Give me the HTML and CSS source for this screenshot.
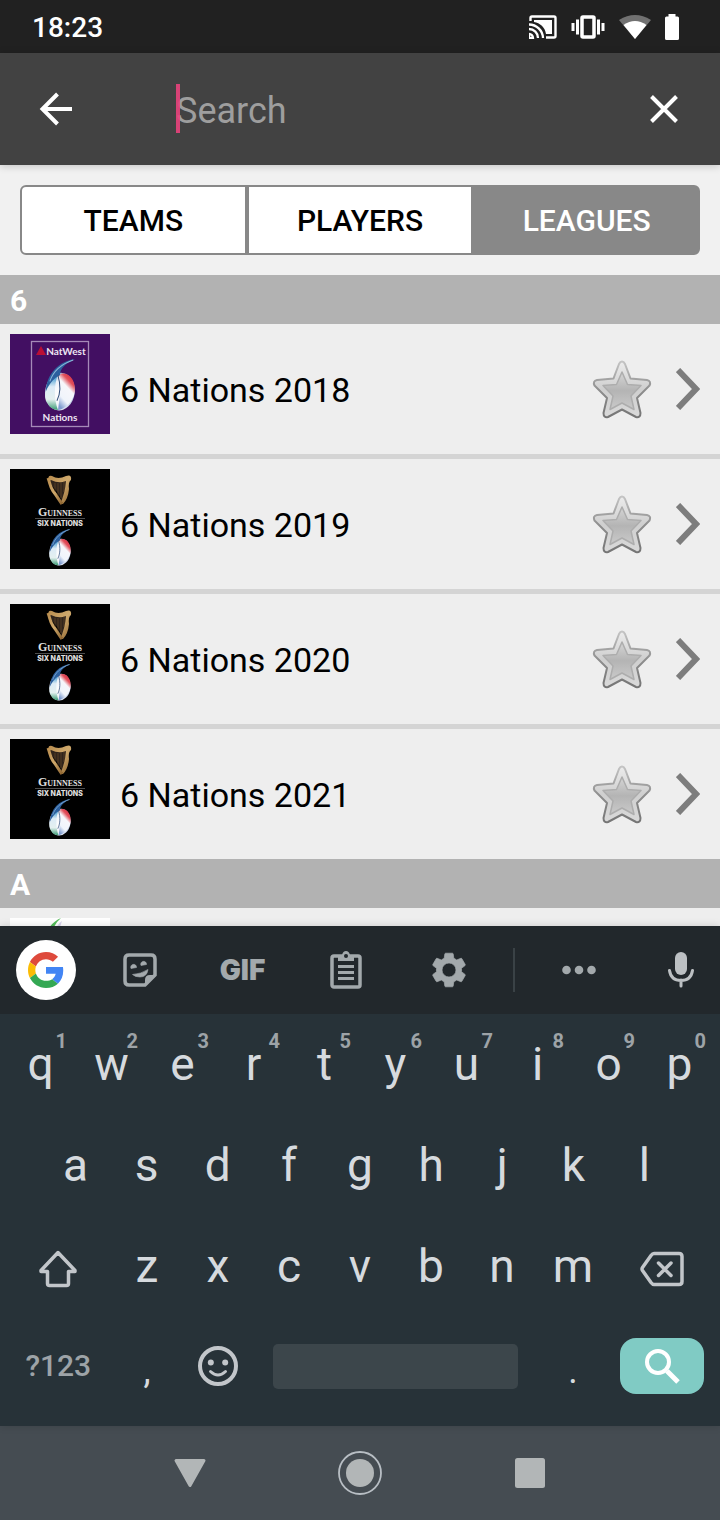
FILE: index.html
```html
<!DOCTYPE html>
<html lang="en">
<head>
<meta charset="utf-8">
<meta name="viewport" content="width=device-width, initial-scale=1">
<title>Search leagues</title>
<link rel="stylesheet" href="styles.css">
</head>
<body>
<svg class="defs" aria-hidden="true">
  <defs>
    <linearGradient id="star-rim" x1="0" y1="0" x2="0" y2="1"><stop offset="0" stop-color="#c4c4c4"/><stop offset=".5" stop-color="#8f8f8f"/><stop offset="1" stop-color="#757575"/></linearGradient>
    <linearGradient id="star-fill" x1="0" y1="0" x2="0" y2="1"><stop offset="0" stop-color="#ececec"/><stop offset=".5" stop-color="#cfcfcf"/><stop offset="1" stop-color="#d9d9d9"/></linearGradient>
    <linearGradient id="star-core" x1="0" y1="0" x2="0" y2="1"><stop offset="0" stop-color="#d6d6d6"/><stop offset=".5" stop-color="#b4b4b4"/><stop offset="1" stop-color="#cacaca"/></linearGradient>
    <radialGradient id="ball" cx=".45" cy=".6" r=".6"><stop offset="0" stop-color="#ffffff"/><stop offset=".6" stop-color="#eef2f9"/><stop offset="1" stop-color="#9db2d6"/></radialGradient>
    <linearGradient id="ball-left" x1="0" y1="0" x2="0" y2="1"><stop offset="0" stop-color="#1b86c4"/><stop offset=".35" stop-color="#dcebf6"/><stop offset=".7" stop-color="#e4f0f0"/><stop offset="1" stop-color="#3b9c74"/></linearGradient>
    <linearGradient id="ball-right" x1=".8" y1="0" x2=".3" y2="1"><stop offset="0" stop-color="#d3203a"/><stop offset=".22" stop-color="#e2525c"/><stop offset=".4" stop-color="#f6f6fb"/><stop offset=".75" stop-color="#f0f4fb"/><stop offset="1" stop-color="#7f9cd0"/></linearGradient>
    <linearGradient id="gold" x1="0" y1="0" x2="1" y2="1"><stop offset="0" stop-color="#b88c4e"/><stop offset=".5" stop-color="#cfa96c"/><stop offset="1" stop-color="#8d6430"/></linearGradient>
  </defs>
  <symbol id="star" viewBox="0 0 60 60">
    <path d="M30 2.500Q31.800 2.500 33 5L38.500 19.500L55 21Q59.500 22 57.500 26.500L45 39L48.500 54Q48.500 59 44 58L30 50.500L16 58Q11.500 59 11.500 54L15 39L2.500 26.500Q.5 22 5 21L21.500 19.500L27 5Q28.200 2.500 30 2.500Z" fill="url(#star-fill)" stroke="url(#star-rim)" stroke-width="2" stroke-linejoin="round"/>
    <path d="M30 13L35.500 25.500L49 26.500L39 37L42 50.500L30 44L18 50.500L21 37L11 26.500L24.500 25.500Z" fill="url(#star-core)" stroke="#adadad" stroke-width="1.500" stroke-linejoin="round"/>
  </symbol>
  <symbol id="chevron" viewBox="0 0 24 42"><path d="M2 2L20 21L2 40" fill="none" stroke="#7d7d7d" stroke-width="6"/></symbol>
  <symbol id="six" viewBox="0 0 30 52">
    <ellipse cx="15" cy="33" rx="14.500" ry="18.500" transform="rotate(8 15 33)" fill="url(#ball)"/>
    <path d="M13 16C2 21 -3 38 3 45C5 49 9 51 13 51C9 40 9 27 13 16Z" fill="url(#ball-left)"/>
    <path d="M13 17C22 11 31 21 29.500 33C28 43 20 50 13 51C15 39 16 27 13 17Z" fill="url(#ball-right)"/>
    <path d="M30 1C14 3 2 15 1 33C5 24 10 19 15 17C15 10 21 5 30 1Z" fill="#2c5f9e"/>
    <path d="M28 2C16 6 8 14 5 23" fill="none" stroke="#8db7d8" stroke-width="1"/>
    <path d="M13 17C16 27 15 36 12 42" fill="none" stroke="#34507c" stroke-width="1"/>
  </symbol>
</svg>

<header class="status">
  <time class="clock">18:23</time>
  <div class="status-icons">
    <svg width="28" height="24" viewBox="0 0 28 24"><path d="M1.500 6V3Q1.500 1.500 3 1.500H25Q26.500 1.500 26.500 3V21Q26.500 22.500 25 22.500H17" fill="none" stroke="#fff" stroke-width="2.400"/><path d="M5 5H23V19H17C16 12 11 8 5 7Z" fill="#fff"/><path d="M0 19A4 4 0 0 1 4 23H0ZM0 14A9 9 0 0 1 9 23M0 9.500A14 14 0 0 1 14 23" fill="none" stroke="#fff" stroke-width="2.300"/></svg>
    <svg width="34" height="24" viewBox="0 0 34 24"><rect x="11" y="2" width="12" height="20" rx="1" fill="none" stroke="#fff" stroke-width="3.500"/><path d="M2 8V16M6.500 4.500V19.500M27.500 4.500V19.500M32 8V16" stroke="#fff" stroke-width="3"/></svg>
    <svg width="32" height="24" viewBox="0 0 32 24"><path d="M16 24L0 5Q16 -5 32 5Z" fill="#717171"/><path d="M16 24L4.500 10Q16 2 27.500 10Z" fill="#fff"/></svg>
    <svg width="14" height="26" viewBox="0 0 14 26"><path d="M3.500 0H10.500V2.500H12.500Q14 2.500 14 4V24.500Q14 26 12.500 26H1.500Q0 26 0 24.500V4Q0 2.500 1.500 2.500H3.500Z" fill="#fff"/></svg>
  </div>
</header>

<form class="toolbar" role="search">
  <button class="icon-btn" type="button" aria-label="Back"><svg width="34" height="34" viewBox="0 0 34 34" fill="none" stroke="#fff" stroke-width="4"><path d="M33 17H4M18.500 2L3.500 17L18.500 32"/></svg></button>
  <div class="field"><input class="query" type="text" placeholder="Search" aria-label="Search"><span class="caret"></span></div>
  <button class="icon-btn" type="button" aria-label="Clear"><svg width="28" height="28" viewBox="0 0 28 28" fill="none" stroke="#fff" stroke-width="4"><path d="M1.500 1.500L26.500 26.500M26.500 1.500L1.500 26.500"/></svg></button>
</form>

<main class="content">
  <div class="tabs" role="tablist">
    <button class="tab" type="button" role="tab" aria-selected="false">TEAMS</button>
    <button class="tab" type="button" role="tab" aria-selected="false">PLAYERS</button>
    <button class="tab active" type="button" role="tab" aria-selected="true">LEAGUES</button>
  </div>

  <h2 class="section">6</h2>
  <ul class="list">
    <li class="row">
      <svg class="logo" viewBox="0 0 100 100">
        <rect width="100" height="100" fill="#420f62"/>
        <rect x="21.500" y="7.500" width="57" height="85" fill="none" stroke="#a58ab8" stroke-width="1.300"/>
        <path d="M31 12L36 21H26Z" fill="#b80f35"/>
        <text x="56" y="21" class="logo-sans">NatWest</text>
        <use href="#six" x="31" y="24" width="38" height="53"/>
        <text x="50" y="87" class="logo-sans">Nations</text>
      </svg>
      <a class="name" href="#">6 Nations 2018</a>
      <button class="fav" type="button" aria-label="Favourite 6 Nations 2018"><svg><use href="#star"/></svg></button>
      <svg class="chevron"><use href="#chevron"/></svg>
    </li>
    <li class="row">
      <svg class="logo" viewBox="0 0 100 100">
        <g id="guinness">
          <rect width="100" height="100"/>
          <path d="M39 9L60 9L56 30L53 34Q48 22 42 17Z" fill="#30241b"/>
          <path d="M39 12Q37 6 42 7Q48 11 56 7Q62 5 61 11Q58 13 59 20Q58 30 53 35L50 35Q55 25 56 12Q49 15 41 11Z" fill="url(#gold)"/>
          <path d="M38 9C40 14 40 18 43 22C47 27 49 31 52 35" fill="none" stroke="url(#gold)" stroke-width="3"/>
          <path d="M45 14V23M48 14V27M51 13V29M54 12V23" stroke="#79572e" stroke-width=".5"/>
          <text x="50" y="47" class="logo-serif">Guinness</text>
          <path d="M25 49.500H75" stroke="#6f6f6f" stroke-width=".7"/>
          <text x="50" y="57" class="logo-caps">SIX NATIONS</text>
          <use href="#six" x="37" y="59" width="26" height="38"/>
        </g>
      </svg>
      <a class="name" href="#">6 Nations 2019</a>
      <button class="fav" type="button" aria-label="Favourite 6 Nations 2019"><svg><use href="#star"/></svg></button>
      <svg class="chevron"><use href="#chevron"/></svg>
    </li>
    <li class="row">
      <svg class="logo" viewBox="0 0 100 100"><use href="#guinness"/></svg>
      <a class="name" href="#">6 Nations 2020</a>
      <button class="fav" type="button" aria-label="Favourite 6 Nations 2020"><svg><use href="#star"/></svg></button>
      <svg class="chevron"><use href="#chevron"/></svg>
    </li>
    <li class="row">
      <svg class="logo" viewBox="0 0 100 100"><use href="#guinness"/></svg>
      <a class="name" href="#">6 Nations 2021</a>
      <button class="fav" type="button" aria-label="Favourite 6 Nations 2021"><svg><use href="#star"/></svg></button>
      <svg class="chevron"><use href="#chevron"/></svg>
    </li>
  </ul>
  <h2 class="section">A</h2>
  <ul class="list">
    <li class="row">
      <svg class="logo" viewBox="0 0 100 100"><rect width="100" height="100" fill="#fff"/><path d="M51 0Q42 4 38 12H43Q45 5 51 0Z" fill="#55bd5b"/><path d="M52 3Q47 6 46 12H49Z" fill="#d9d4ee"/></svg>
    </li>
  </ul>
</main>

<section class="keyboard" aria-label="Keyboard">
  <div class="strip">
    <button class="google" type="button" aria-label="Google"><svg width="36" height="36" viewBox="0 0 48 48"><path fill="#de4a3c" d="M24 9.500c3.540 0 6.710 1.220 9.210 3.600l6.850-6.850C35.900 2.380 30.470 0 24 0 14.620 0 6.510 5.380 2.560 13.220l7.980 6.190C12.430 13.720 17.740 9.500 24 9.500z"/><path fill="#4285f4" d="M46.980 24.550c0-1.570-.15-3.090-.38-4.550H24v9.020h12.940c-.58 2.960-2.260 5.480-4.780 7.180l7.730 6c4.510-4.180 7.090-10.360 7.090-17.650z"/><path fill="#fbbc05" d="M10.530 28.590c-.48-1.450-.76-2.990-.76-4.590s.27-3.140.76-4.590l-7.980-6.190C.92 16.460 0 20.120 0 24s.92 7.540 2.560 10.780l7.970-6.190z"/><path fill="#34a853" d="M24 48c6.480 0 11.930-2.130 15.890-5.810l-7.730-6c-2.150 1.450-4.920 2.300-8.160 2.300-6.260 0-11.570-4.220-13.470-9.910l-7.980 6.190C6.510 42.620 14.620 48 24 48z"/></svg></button>
    <button class="tool" type="button" aria-label="Stickers"><svg width="34" height="34" viewBox="0 0 34 34"><path d="M6 2H28Q32 2 32 6V22L22 32H6Q2 32 2 28V6Q2 2 6 2Z" fill="none" stroke="#a3a9ac" stroke-width="3.500"/><path d="M22 32V27Q22 22 27 22H32Z" fill="#a3a9ac"/><path d="M8 15.500A2.900 2.900 0 1 1 13.500 14.500ZM18 12.500A2.900 2.900 0 1 1 23.500 11.500ZM9.500 21.500Q18 21 25 16.500Q24 24 17 24Q12 24 9.500 21.500Z" fill="#a3a9ac" stroke="#a3a9ac" stroke-width=".6"/></svg></button>
    <button class="tool gif" type="button">GIF</button>
    <button class="tool" type="button" aria-label="Clipboard"><svg width="32" height="38" viewBox="0 0 32 38" fill="none" stroke="#a3a9ac"><rect x="2" y="5" width="28" height="31" rx="2" stroke-width="3.500"/><path d="M8 15.500H24M8 21.500H24M8 27.500H24" stroke-width="3"/><path d="M8 10V4H12Q13 0 16 0Q19 0 20 4H24V10Z" fill="#a3a9ac" stroke="none"/><circle cx="16" cy="5" r="2" fill="#22282c" stroke="none"/></svg></button>
    <button class="tool" type="button" aria-label="Settings"><svg width="42" height="42" viewBox="0 0 24 24" fill="#a3a9ac"><path d="M19.140 12.940c.04-.3.06-.61.06-.94 0-.32-.02-.64-.07-.94l2.030-1.580c.18-.14.23-.41.12-.61l-1.920-3.320c-.12-.22-.37-.29-.59-.22l-2.390.96c-.5-.38-1.030-.7-1.620-.94l-.36-2.540c-.04-.24-.24-.41-.48-.41h-3.840c-.24 0-.43.17-.47.41l-.36 2.540c-.59.24-1.130.57-1.620.94l-2.390-.96c-.22-.08-.47 0-.59.22L2.740 8.870c-.12.21-.08.47.12.61l2.030 1.580c-.05.3-.09.63-.09.94s.02.64.07.94l-2.030 1.580c-.18.14-.23.41-.12.61l1.920 3.320c.12.22.37.29.59.22l2.390-.96c.5.38 1.030.7 1.620.94l.36 2.540c.05.24.24.41.48.41h3.840c.24 0 .44-.17.47-.41l.36-2.540c.59-.24 1.130-.56 1.620-.94l2.390.96c.22.08.47 0 .59-.22l1.920-3.320c.12-.22.07-.47-.12-.61l-2.010-1.580zM12 16a4 4 0 1 1 0-8 4 4 0 0 1 0 8z" stroke="#a3a9ac" stroke-width=".4"/></svg></button>
    <span class="divider"></span>
    <button class="tool" type="button" aria-label="More"><svg width="34" height="10" viewBox="0 0 34 10" fill="#a3a9ac"><circle cx="4.500" cy="5" r="4.300"/><circle cx="17" cy="5" r="4.300"/><circle cx="29.500" cy="5" r="4.300"/></svg></button>
    <button class="tool mic" type="button" aria-label="Voice input"><svg width="26" height="36" viewBox="0 0 26 36"><rect x="7" y="0" width="12" height="23" rx="6" fill="#bcc0c3"/><path d="M1.500 18.500Q3 28.500 13 28.500Q23 28.500 24.500 18.500M13 28V34" fill="none" stroke="#bcc0c3" stroke-width="3" stroke-linecap="round"/></svg></button>
  </div>

  <div class="keys">
    <div class="key-row">
      <button class="key">q<sup>1</sup></button><button class="key">w<sup>2</sup></button><button class="key">e<sup>3</sup></button><button class="key">r<sup>4</sup></button><button class="key">t<sup>5</sup></button><button class="key">y<sup>6</sup></button><button class="key">u<sup>7</sup></button><button class="key">i<sup>8</sup></button><button class="key">o<sup>9</sup></button><button class="key">p<sup>0</sup></button>
    </div>
    <div class="key-row inset">
      <button class="key">a</button><button class="key">s</button><button class="key">d</button><button class="key">f</button><button class="key">g</button><button class="key">h</button><button class="key">j</button><button class="key">k</button><button class="key">l</button>
    </div>
    <div class="key-row">
      <button class="key wide low" aria-label="Shift"><svg width="40" height="38" viewBox="0 0 40 38" fill="none" stroke="#c2c6ca" stroke-width="3.500" stroke-linejoin="round"><path d="M20 2.500L37 20.500V21.500H30.500V33.500Q30.500 35.500 28.500 35.500H11.500Q9.500 35.500 9.500 33.500V21.500H3V20.500Z"/></svg></button><button class="key">z</button><button class="key">x</button><button class="key">c</button><button class="key">v</button><button class="key">b</button><button class="key">n</button><button class="key">m</button><button class="key wide low" aria-label="Backspace"><svg width="44" height="36" viewBox="0 0 44 36" fill="none" stroke="#c2c6ca" stroke-width="3.500"><path d="M14 2.500H39Q42 2.500 42 5.500V30.500Q42 33.500 39 33.500H14Q12.500 33.500 11 31.500L2.500 19.500Q1.500 18 2.500 16.500L11 4.500Q12.500 2.500 14 2.500Z"/><path d="M18.500 12L31 24.500M31 12L18.500 24.500" stroke-linecap="round"/></svg></button>
    </div>
    <div class="key-row bottom">
      <button class="key wide symbols">?123</button><button class="key punct">,</button><button class="key" aria-label="Emoji"><svg width="42" height="42" viewBox="0 0 42 42" fill="none" stroke="#c2c6ca"><circle cx="21" cy="21" r="18" stroke-width="4"/><circle cx="13.800" cy="17.500" r="3" fill="#c2c6ca" stroke="none"/><circle cx="28.200" cy="17.500" r="3" fill="#c2c6ca" stroke="none"/><path d="M13.500 26.500Q21 33.500 28.500 26.500" stroke-width="3" stroke-linecap="round"/></svg></button><button class="key space" aria-label="Space"><span class="space-bar"></span></button><button class="key punct">.</button><button class="key wide" aria-label="Search"><span class="go"><svg width="38" height="38" viewBox="0 0 38 38" fill="none" stroke="#fff"><circle cx="15" cy="15" r="11" stroke-width="4"/><path d="M24 24L35 35" stroke-width="5"/></svg></span></button>
    </div>
  </div>
</section>

<nav class="nav" aria-label="System">
  <button class="nav-btn" aria-label="Back"><svg width="34" height="30" viewBox="0 0 34 30"><path d="M3 2.500H31L17 27.500Z" fill="#b2b6b7" stroke="#b2b6b7" stroke-width="3" stroke-linejoin="round"/></svg></button>
  <button class="nav-btn" aria-label="Home"><svg width="44" height="44" viewBox="0 0 44 44"><circle cx="22" cy="22" r="21" fill="none" stroke="#b8bec4" stroke-width="1.800"/><circle cx="22" cy="22" r="14" fill="#b2b6b7"/></svg></button>
  <button class="nav-btn" aria-label="Recent apps"><svg width="30" height="30" viewBox="0 0 30 30"><rect width="30" height="30" rx="2.500" fill="#b2b6b7"/></svg></button>
</nav>
</body>
</html>
```
FILE: styles.css
```css
* { box-sizing: border-box; }

body {
  margin: 0;
  height: 100vh;
  display: flex;
  flex-direction: column;
  overflow: hidden;
  background: #eee;
  color: #000;
  font-family: Roboto, "Liberation Sans", sans-serif;
}

button {
  margin: 0;
  padding: 0;
  border: 0;
  background: none;
  color: inherit;
  font: inherit;
}

svg { display: block; }
.defs { position: absolute; width: 0; height: 0; }

/* Status bar */
.status {
  flex: none;
  display: flex;
  align-items: center;
  justify-content: space-between;
  height: 53px;
  padding: 0 41px 0 32px;
  background: #212121;
  color: #fff;
}
.clock { padding-top: 2px; font-size: 28px; font-weight: 500; line-height: 54px; }
.status-icons { display: flex; align-items: center; gap: 14px; }

/* Search toolbar */
.toolbar {
  flex: none;
  z-index: 1;
  display: flex;
  align-items: center;
  height: 112px;
  background: #424242;
  box-shadow: 0 1px 8px rgba(0, 0, 0, .2);
}
.icon-btn {
  flex: none;
  width: 112px;
  height: 112px;
  display: grid;
  place-items: center;
}
.field { position: relative; flex: 1; min-width: 0; padding-left: 64px; }
.query {
  display: block;
  width: 100%;
  height: 60px;
  padding: 4px 0 0;
  border: 0;
  outline: 0;
  background: none;
  color: #fff;
  font: 400 36px/56px Roboto, "Liberation Sans", sans-serif;
}
.query::placeholder { color: #9e9e9e; opacity: 1; }
.caret {
  position: absolute;
  left: 64px;
  top: 5px;
  width: 4px;
  height: 49px;
  background: #e9437c;
  opacity: .9;
}

/* Results */
.content { flex: 1; min-height: 0; overflow: hidden; }
.tabs { display: flex; padding: 20px; background: #f1f1f1; }
.tab {
  flex: 1;
  height: 70px;
  border: 2px solid #888;
  background: #fff;
  font-size: 30px;
  font-weight: 500;
}
.tab:first-child { border-radius: 6px 0 0 6px; }
.tab:last-child { border-radius: 0 6px 6px 0; }
.tab.active { background: #888; color: #fff; }

.section {
  margin: 0;
  padding: 2px 10px 0;
  background: #b2b2b2;
  color: #fff;
  font-size: 30px;
  font-weight: 700;
  line-height: 47px;
}
.list { margin: 0; padding: 0; list-style: none; }
.row {
  display: flex;
  align-items: center;
  height: 130px;
  padding: 0 20px 0 10px;
}
.row + .row { height: 135px; border-top: 5px solid #d4d4d4; }
.logo { flex: none; align-self: flex-start; width: 100px; height: 100px; margin: 10px 10px 0 0; }
.logo-sans, .logo-serif, .logo-caps { fill: #fff; text-anchor: middle; }
.logo-sans { font-family: Lato, sans-serif; font-size: 10px; font-weight: 700; fill: #eee5f2; }
.logo-serif { font-family: "Liberation Serif", serif; font-size: 12px; font-weight: 700; font-variant: small-caps; fill: #e0e0e0; }
.logo-caps { font-family: Inter, sans-serif; font-size: 7px; font-weight: 800; fill: #e0e0e0; }
.name {
  flex: 1;
  min-width: 0;
  padding-top: 2px;
  color: #000;
  font-size: 34px;
  line-height: 40px;
  text-decoration: none;
}
.fav { flex: none; width: 60px; height: 60px; margin-right: 24px; }
.fav svg { width: 60px; height: 60px; }
.chevron { flex: none; width: 24px; height: 42px; }

/* Keyboard */
.keyboard {
  flex: none;
  z-index: 1;
  background: #273238;
  box-shadow: 0 0 8px rgba(0, 0, 0, .15);
}
.strip {
  display: grid;
  grid-template-columns: 72fr repeat(4, 103fr) 28fr 102fr 74fr;
  align-items: center;
  height: 88px;
  padding: 0 16px;
  background: #22282c;
}
.google {
  width: 60px;
  height: 60px;
  border-radius: 50%;
  background: #fff;
  display: grid;
  place-items: center;
}
.tool { height: 60px; display: grid; place-items: center; }
.gif { color: #a3a9ac; font-family: Inter, sans-serif; font-size: 28px; font-weight: 900; }
.mic { justify-content: end; padding-right: 10px; }
.divider { justify-self: center; width: 2px; height: 44px; background: #3a4246; }

.keys { padding: 0 5px 8px; }
.key-row { display: flex; }
.inset { padding: 0 35px; }
.key {
  position: relative;
  flex: 2 1 0;
  min-width: 0;
  height: 101px;
  padding-bottom: 2px;
  display: grid;
  place-items: center;
  color: #d6dade;
  font-size: 46px;
  line-height: 54px;
}
.key sup {
  position: absolute;
  top: 15px;
  right: 9px;
  color: #9da3a7;
  font-size: 20px;
  font-weight: 700;
  line-height: 24px;
}
.wide { flex-grow: 3; }
.low { padding: 4px 0 0; }
.bottom .key { padding-bottom: 3px; }
.symbols { color: #9da3a7; font-size: 30px; font-weight: 500; }
.bottom .punct { padding: 6px 0 0; font-size: 36px; }
.space { flex-grow: 8; }
.space-bar {
  width: calc(100% - 39px);
  height: 45px;
  border-radius: 5px;
  background: #3c464b;
}
.go {
  width: 84px;
  height: 56px;
  border-radius: 16px;
  background: #80cbc4;
  display: grid;
  place-items: center;
}

/* System navigation */
.nav {
  flex: none;
  display: flex;
  height: 94px;
  padding: 0 105px;
  background: #454c52;
}
.nav-btn { flex: 1; display: grid; place-items: center; }
```
